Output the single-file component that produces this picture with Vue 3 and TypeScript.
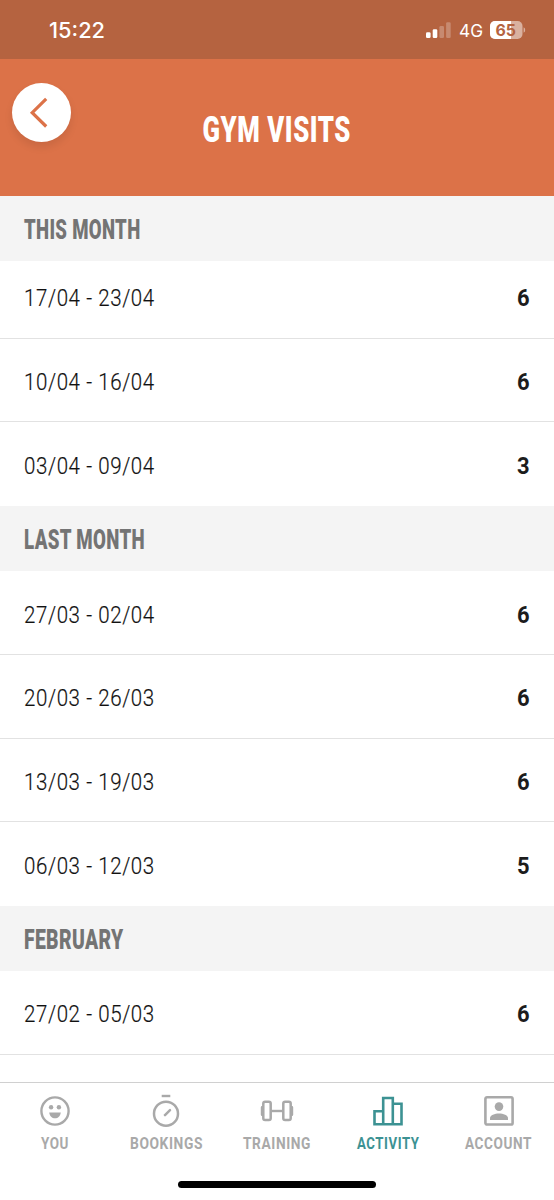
<script setup lang="ts">
interface Visit {
  range: string
  count: number
}
interface Section {
  title: string
  width: number
  visits: Visit[]
}
interface Tab {
  id: string
  label: string
  width: number
  active?: boolean
}

const sections: Section[] = [
  {
    title: 'THIS MONTH',
    width: 116.5,
    visits: [
      { range: '17/04 - 23/04', count: 6 },
      { range: '10/04 - 16/04', count: 6 },
      { range: '03/04 - 09/04', count: 3 },
    ],
  },
  {
    title: 'LAST MONTH',
    width: 121,
    visits: [
      { range: '27/03 - 02/04', count: 6 },
      { range: '20/03 - 26/03', count: 6 },
      { range: '13/03 - 19/03', count: 6 },
      { range: '06/03 - 12/03', count: 5 },
    ],
  },
  {
    title: 'FEBRUARY',
    width: 99.5,
    visits: [{ range: '27/02 - 05/03', count: 6 }],
  },
]

const tabs: Tab[] = [
  { id: 'you', label: 'YOU', width: 28 },
  { id: 'bookings', label: 'BOOKINGS', width: 73 },
  { id: 'training', label: 'TRAINING', width: 68 },
  { id: 'activity', label: 'ACTIVITY', width: 62.5, active: true },
  { id: 'account', label: 'ACCOUNT', width: 67 },
]
</script>

<template>
  <div class="screen">
    <div class="status">
      <svg class="clock" width="60" height="24">
        <text x="0" y="19" textLength="56" lengthAdjust="spacingAndGlyphs">15:22</text>
      </svg>
      <div class="indicators">
        <svg class="signal" width="26" height="17" viewBox="0 0 26 17" fill="#fff">
          <rect x="0" y="10.3" width="4.6" height="5.7" rx="1.3" />
          <rect x="6.7" y="7.3" width="4.6" height="8.7" rx="1.3" />
          <rect x="13.4" y="4" width="4.6" height="12" rx="1.3" opacity=".25" />
          <rect x="20.1" y="0.3" width="4.6" height="15.7" rx="1.3" opacity=".25" />
        </svg>
        <svg class="network" width="24" height="20">
          <text x="0" y="16" textLength="24" lengthAdjust="spacingAndGlyphs">4G</text>
        </svg>
        <svg class="battery" width="36" height="18" viewBox="0 0 36 18">
          <rect width="32.5" height="18" rx="5" fill="#dab1a0" />
          <path d="M5 0H21V18H5A5 5 0 0 1 0 13V5A5 5 0 0 1 5 0Z" fill="#fff" />
          <path d="M33.6 6.2Q35.2 7 35.2 9T33.6 11.8Z" fill="#dab1a0" />
          <text x="5.5" y="14.7" textLength="20.5" lengthAdjust="spacingAndGlyphs">65</text>
        </svg>
      </div>
    </div>

    <header class="header">
      <button class="back" aria-label="Back">
        <svg width="59" height="59" viewBox="0 0 59 59" fill="none" stroke="#dc7248" stroke-width="3.2">
          <path d="M34.2 15.9L20.2 29.7L34.2 43.5" />
        </svg>
      </button>
      <svg class="title" width="149" height="40">
        <text x="-0.5" y="32" textLength="148.5" lengthAdjust="spacingAndGlyphs">GYM VISITS</text>
      </svg>
    </header>

    <main class="list">
      <section v-for="section in sections" :key="section.title" class="section">
        <div class="section-head">
          <svg width="200" height="65">
            <text x="0" y="42.5" :textLength="section.width" lengthAdjust="spacingAndGlyphs">{{ section.title }}</text>
          </svg>
        </div>
        <div v-for="visit in section.visits" :key="visit.range" class="row">
          <svg class="range" width="132" height="30">
            <text x="0" y="24.8" textLength="130.8" lengthAdjust="spacingAndGlyphs">{{ visit.range }}</text>
          </svg>
          <svg class="count" width="13" height="30">
            <text x="0" y="24.8" textLength="12.6" lengthAdjust="spacingAndGlyphs">{{ visit.count }}</text>
          </svg>
        </div>
      </section>
    </main>

    <nav class="tabs">
      <div v-for="tab in tabs" :key="tab.id" class="tab" :class="{ active: tab.active }">
        <svg class="icon" width="36" height="36" viewBox="0 0 36 36" fill="none" stroke="currentColor">
          <template v-if="tab.id === 'you'">
            <circle cx="18" cy="18" r="13.6" stroke-width="2.4" />
            <circle cx="14.1" cy="14.2" r="2.2" fill="currentColor" stroke="none" />
            <circle cx="21.9" cy="14.2" r="2.2" fill="currentColor" stroke="none" />
            <path d="M12.2 19.4H23.8C23.3 23.3 21 25.2 18 25.2S12.7 23.3 12.2 19.4Z" fill="currentColor" stroke="none" />
          </template>
          <template v-else-if="tab.id === 'bookings'">
            <circle cx="18" cy="20.7" r="12" stroke-width="2.5" />
            <path d="M13.7 3H22.3" stroke-width="2.4" />
            <path d="M17 22.1L22 17.1" stroke-width="2.5" stroke-linecap="round" />
          </template>
          <template v-else-if="tab.id === 'training'">
            <rect x="4.3" y="8.8" width="7.4" height="18.2" rx="1.8" stroke-width="2.5" />
            <rect x="24.3" y="8.8" width="7.4" height="18.2" rx="1.8" stroke-width="2.5" />
            <path d="M12 18H24" stroke-width="2.4" />
            <path d="M3 14.2V21.8M33 14.2V21.8" stroke-width="2.4" stroke-linecap="round" />
          </template>
          <template v-else-if="tab.id === 'activity'">
            <path d="M4.5 18.3H13.2V31.2H4.5ZM13.2 5H22.8V31.2H13.2ZM22.8 10.7H31.5V31.2H22.8Z" stroke-width="2.6" />
          </template>
          <template v-else>
            <rect x="4.4" y="4.3" width="27.2" height="27.2" rx="1.6" stroke-width="2.6" />
            <circle cx="18" cy="13.6" r="4.3" fill="currentColor" stroke="none" />
            <path d="M9 27V25.2C9 22.3 13.8 20.6 18 20.6S27 22.3 27 25.2V27Z" fill="currentColor" stroke="none" />
          </template>
        </svg>
        <svg class="label" :width="tab.width" height="20">
          <text x="0" y="15.5" :textLength="tab.width" lengthAdjust="spacingAndGlyphs">{{ tab.label }}</text>
        </svg>
      </div>
      <div class="home-indicator"></div>
    </nav>
  </div>
</template>

<style>
body {
  margin: 0;
}
</style>

<style scoped>
.screen {
  width: 554px;
  height: 1200px;
  display: flex;
  flex-direction: column;
  overflow: hidden;
  background: #fff;
  font-family: Roboto, 'Liberation Sans', sans-serif;
}
svg {
  display: block;
  flex: none;
  overflow: visible;
}
.status {
  flex: none;
  box-sizing: border-box;
  height: 59px;
  padding: 19px 28px 0 48.5px;
  display: flex;
  justify-content: space-between;
  background: #b56340;
  font-family: Inter, sans-serif;
}
.clock text {
  fill: #fff;
  font-size: 21.5px;
  font-weight: 500;
}
.indicators {
  display: flex;
  align-items: flex-start;
}
.signal {
  margin: 3px 7px 0 0;
}
.network {
  margin: 2px 7px 0 0;
}
.network text {
  fill: #fff;
  font-size: 17.5px;
  font-weight: 400;
}
.battery {
  margin-top: 2px;
}
.battery text {
  fill: #b56340;
  font-size: 16px;
  font-weight: 700;
}
.header {
  flex: none;
  box-sizing: border-box;
  height: 137px;
  padding: 24px 12px 0;
  display: grid;
  grid-template-columns: 59px 1fr 59px;
  justify-items: center;
  background: #dc7248;
}
.back {
  width: 59px;
  height: 59px;
  padding: 0;
  border: 0;
  border-radius: 50%;
  background: #fff;
  box-shadow: 0 5px 9px rgba(0, 0, 0, 0.09);
}
.title {
  margin-top: 27px;
}
.title text {
  fill: #fff;
  font-size: 37px;
  font-weight: 900;
  letter-spacing: 0.8px;
}
.list {
  flex: 1;
  min-height: 0;
  overflow: hidden;
}
.section-head {
  height: 65px;
  padding-left: 24px;
  background: #f4f4f4;
}
.section-head text {
  fill: #747474;
  font-size: 27.5px;
  font-weight: 900;
  letter-spacing: 0.5px;
}
.row {
  box-sizing: border-box;
  height: 83.7px;
  padding: 0 24px;
  display: flex;
  align-items: center;
  justify-content: space-between;
  border-bottom: 1px solid #e2e2e2;
}
.section:first-child .row:nth-child(2) {
  height: 77.8px;
  padding-bottom: 6px;
}
.row:last-child {
  border-bottom-color: transparent;
}
.section:last-child .row:last-child {
  border-bottom-color: #e2e2e2;
}
.range text {
  fill: #111;
  stroke: #111;
  stroke-width: 0.2px;
  font-size: 24px;
  font-weight: 300;
  letter-spacing: 0.7px;
}
.count text {
  fill: #1c1c1c;
  font-size: 23px;
  font-weight: 700;
}
.tabs {
  position: relative;
  flex: none;
  box-sizing: border-box;
  height: 118px;
  border-top: 1px solid #d0d0d0;
  display: grid;
  grid-template-columns: repeat(5, 1fr);
  background: #fff;
}
.tab {
  display: flex;
  flex-direction: column;
  align-items: center;
  padding-top: 10px;
  color: #a9a9a9;
}
.tab.active {
  color: #3c9293;
}
.label {
  margin-top: 4px;
}
.label text {
  fill: currentColor;
  font-size: 16.5px;
  font-weight: 700;
  letter-spacing: 0.7px;
}
.home-indicator {
  position: absolute;
  left: 178px;
  top: 98px;
  width: 198px;
  height: 7px;
  border-radius: 4px;
  background: #000;
}
</style>
